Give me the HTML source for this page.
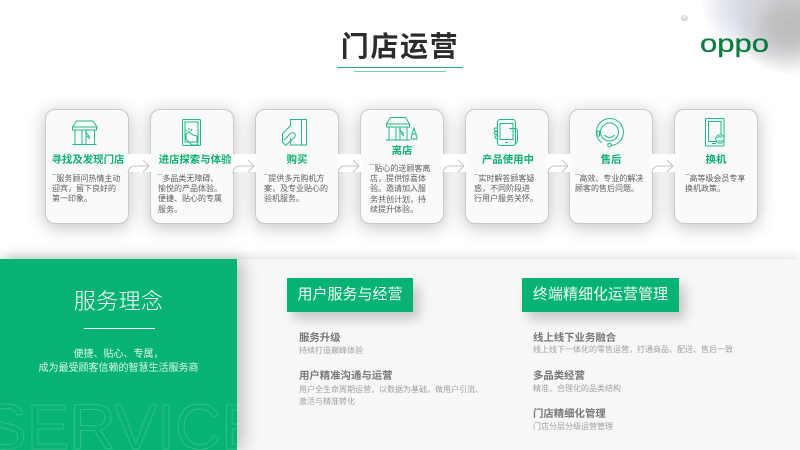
<!DOCTYPE html>
<html lang="zh"><head><meta charset="utf-8"><title>门店运营</title>
<style>
html,body{margin:0;padding:0;width:800px;height:450px;overflow:hidden;background:#fff}
body{position:relative;font-family:"Liberation Sans","Noto Sans CJK SC",sans-serif}
div{position:absolute;box-sizing:border-box}
.blob1{left:700px;top:-65px;width:150px;height:130px;border-radius:50%;background:radial-gradient(closest-side,#d6d9e2 0%,#dadde6 55%,#eceef3 80%,rgba(255,255,255,0) 100%)}
.blob2{left:735px;top:-25px;width:110px;height:100px;border-radius:50%;background:radial-gradient(closest-side,#bcbbbc 0%,#c2c1c3 35%,rgba(205,205,208,.7) 65%,rgba(255,255,255,0) 100%)}
.dot{left:681px;top:15px;width:7px;height:6px;border-radius:50%;background:radial-gradient(circle at 50% 35%,#f2f2f4,#b9bcc4)}
.title{left:300px;top:26px;width:200px;text-align:center;font-size:28px;line-height:42px;font-weight:700;color:#2b2b2b;letter-spacing:1.6px;white-space:nowrap}
.l1{left:337px;top:67px;width:126px;height:1px;background:#2fa97e}
.l2{left:354px;top:71px;width:92px;height:1px;background:#7fcfae;box-shadow:0 3px 6px rgba(0,0,0,.07)}
.card{top:109px;width:84px;height:115px;background:#fafafa;border:1px solid #c9c9c9;border-radius:10px;box-shadow:0 3px 18px rgba(0,0,0,.25)}
.gap{top:154px;width:24px;height:18px;background:#fff}
.ct{width:84px;text-align:center;font-size:10.4px;line-height:14px;font-weight:700;color:#0bb070;white-space:nowrap}
.cd{font-size:8px;line-height:10.2px;color:#5c5c5c;white-space:nowrap}
.band{left:0;top:259px;width:800px;height:191px;background:#f7f7f7;box-shadow:0 -2px 9px rgba(0,0,0,.12)}
.green{left:0;top:259px;width:237px;height:191px;background:#06b374;box-shadow:6px 0 16px rgba(0,0,0,.22)}
.h{left:0;top:285px;width:237px;text-align:center;color:#fff;font-size:22px;line-height:34px;font-weight:300;letter-spacing:.4px;white-space:nowrap}
.wl{left:84px;top:328px;width:71px;height:1px;background:#fff}
.p{left:0;top:348px;width:237px;text-align:center;color:#dff6ec;font-size:10px;line-height:13.5px;white-space:nowrap}
.tag{top:278px;height:34px;background:#06b374;color:#f2fff9;font-size:15px;line-height:34px;text-align:center;white-space:nowrap;box-shadow:6px 7px 12px rgba(0,0,0,.2)}
.b{font-size:10.4px;line-height:14px;font-weight:700;color:#777;white-space:nowrap}
.s{font-size:8px;line-height:13px;color:#a0a0a0;white-space:nowrap}
svg{position:absolute;left:0;top:0}
</style></head><body>
<div class="blob1"></div><div class="blob2"></div><div class="dot"></div>
<svg width="800" height="70" style="z-index:2"><text x="700" y="52" font-family="Liberation Sans" font-size="25" fill="#0b7b40" stroke="#0b7b40" stroke-width=".3" textLength="69" lengthAdjust="spacingAndGlyphs">oppo</text></svg>
<div class="title">门店运营</div><div class="l1"></div><div class="l2"></div>

<div class="card" style="left:45px"></div><div class="card" style="left:150px"></div><div class="card" style="left:255px"></div><div class="card" style="left:360px"></div><div class="card" style="left:465px"></div><div class="card" style="left:569px"></div><div class="card" style="left:674px"></div>
<div class="gap" style="left:127px"></div><div class="gap" style="left:232px"></div><div class="gap" style="left:337px"></div><div class="gap" style="left:442px"></div><div class="gap" style="left:547px"></div><div class="gap" style="left:651px"></div>

<svg width="800" height="230" fill="none" stroke="#c4c4c4" stroke-width="1">
<path d="M128 173q1-7 7-7h13M143 160l6 6-6 6M233 173q1-7 7-7h13M248 160l6 6-6 6M338 173q1-7 7-7h13M353 160l6 6-6 6M443 173q1-7 7-7h13M458 160l6 6-6 6M548 173q1-7 7-7h13M562 160l6 6-6 6M652 173q1-7 7-7h13M667 160l6 6-6 6"/>
<g stroke="#1fbb84">
<path d="M72.500 127l4-6h16.500l4 6zM72.500 127v3h24v-3M75 130v14.500M82 130v14.500M94.500 130v14.500M72.500 144.500h24M86 130v14.500M85 132l5 5M87 136l3 3"/>
<rect x="182.500" y="119.500" width="18" height="26" rx="1"/><rect x="185" y="122" width="13" height="20"/>
<path d="M186 139v-5l2-1v-1l2 0v1l3 2 4 1v5l1 4h-6zM189 128v2M185.500 130l1.500 1M192 129l-1 2"/>
<path d="M290.500 126V119.500H306.500V145H290.500V138M301.500 119.500V145M290 126l-7.500 8v8l3 3.500M285.500 145.500l9-8q2-3-.5-4.500-2-1-4 1l-6 6"/>
<path d="M386.500 124l4-6.500h15l4 6.500zM386.500 124v3h23v-3M389 127v13M396 127v13M407 127v13M386 140h24M400 127v13M399 129l5 5M401 133l3 3M414 128l-2 6h4zM412 134l-1 5h6l-1-5M414 139v1"/>
<rect x="497.500" y="119.500" width="18" height="26" rx="2.500"/><path d="M500 123.500h13v16h-13zM505 142.500h3M497 128h-2q-1 .5-.5 2l.5 1h2M497 132h-2q-1 1 0 2.500h2M497 136h-1.500q-1 1 0 2.500l1.500.500M509 128.500h6q2 0 2.500 2v10q-.5 3-3 3.500"/>
<path d="M602 143a13.500 13.500 0 1 1 9 2.500"/><circle cx="609.500" cy="132" r="9"/><path d="M604.500 135q5 5 10 0"/><rect x="597" y="131" width="2.500" height="5"/><circle cx="609.500" cy="145" r="1.800"/>
<rect x="705.500" y="118.500" width="18.500" height="27.500" rx="1"/><rect x="708.500" y="121.500" width="12.500" height="20"/><path d="M712 143.500h4"/>
<circle cx="720" cy="139" r="4.200" fill="#fafafa"/><path d="M717.500 138q2-2.500 4.500-.5M722.500 140q-2 2.500-4.500.500"/>
</g></svg>

<div class="ct" style="left:46px;top:154px">寻找及发现门店</div>
<div class="cd" style="left:52px;top:174px">¯服务顾问热情主动<br>迎宾，留下良好的<br>第一印象。</div>
<div class="ct" style="left:153px;top:154px">进店探索与体验</div>
<div class="cd" style="left:158px;top:174px">¯多品类无障碍、<br>愉悦的产品体验。<br>便捷、贴心的专属<br>服务。</div>
<div class="ct" style="left:255px;top:154px">购买</div>
<div class="cd" style="left:264px;top:174px">¯提供多元购机方<br>案，及专业贴心的<br>验机服务。</div>
<div class="ct" style="left:360px;top:145px">离店</div>
<div class="cd" style="left:370px;top:164px">¯贴心的送顾客离<br>店，提供惊喜体<br>验。邀请加入服<br>务共创计划，持<br>续提升体验。</div>
<div class="ct" style="left:466px;top:154px">产品使用中</div>
<div class="cd" style="left:474px;top:174px">¯实时解答顾客疑<br>惑，不同阶段进<br>行用户服务关怀。</div>
<div class="ct" style="left:569px;top:154px">售后</div>
<div class="cd" style="left:575px;top:174px">¯高效、专业的解决<br>顾客的售后问题。</div>
<div class="ct" style="left:674px;top:154px">换机</div>
<div class="cd" style="left:685px;top:174px">¯高等级会员专享<br>换机政策。</div>

<div class="band"></div><div class="green"></div>
<svg width="800" height="450" style="z-index:1;-webkit-mask-image:linear-gradient(90deg,#000 0,#000 237px,rgba(0,0,0,.4) 240px,transparent 262px);mask-image:linear-gradient(90deg,#000 0,#000 237px,rgba(0,0,0,.4) 240px,transparent 262px)"><text x="-16" y="449" font-family="Liberation Sans" font-size="64" fill="none" stroke="rgba(255,255,255,.16)" stroke-width="1">SERVICE</text></svg>
<div class="h">服务理念</div><div class="wl"></div>
<div class="p">便捷、贴心、专属，<br>成为最受顾客信赖的智慧生活服务商</div>

<div class="tag" style="left:287px;width:126px">用户服务与经营</div>
<div class="tag" style="left:522px;width:157px">终端精细化运营管理</div>
<div class="b" style="left:299px;top:332px">服务升级</div>
<div class="s" style="left:299px;top:344px">持续打造巅峰体验</div>
<div class="b" style="left:299px;top:370px">用户精准沟通与运营</div>
<div class="s" style="left:299px;top:383px">用户全生命周期运营，以数据为基础，做用户引流、</div>
<div class="s" style="left:299px;top:395px">激活与精准转化</div>
<div class="b" style="left:533px;top:332px">线上线下业务融合</div>
<div class="s" style="left:533px;top:343px">线上线下一体化的零售运营，打通商品、配送、售后一致</div>
<div class="b" style="left:533px;top:370px">多品类经营</div>
<div class="s" style="left:533px;top:382px">精准、合理化的品类结构</div>
<div class="b" style="left:533px;top:408px">门店精细化管理</div>
<div class="s" style="left:533px;top:420px">门店分层分级运营管理</div>
</body></html>
